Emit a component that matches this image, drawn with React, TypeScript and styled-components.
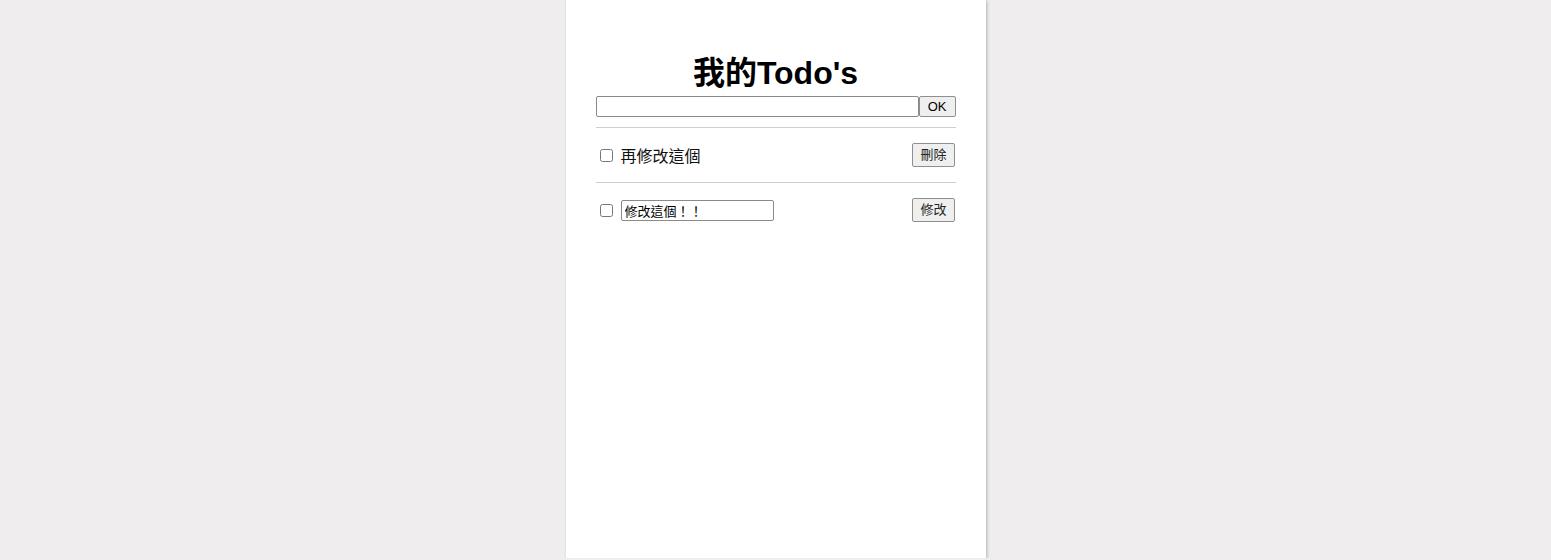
import React, { useState } from "react";
import styled, { createGlobalStyle } from "styled-components";

const GlobalStyle = createGlobalStyle`
  html, body {
    margin: 0;
    padding: 0;
    background: #efedee;
    font-family: "Liberation Sans", "Noto Sans CJK TC", sans-serif;
  }
`;

type Todo = { id: number; text: string; editing: boolean; done: boolean };

const App = () => {
  const [todos, setTodos] = useState<Todo[]>([
    { id: 1, text: "再修改這個", editing: false, done: false },
    { id: 2, text: "修改這個！！", editing: true, done: false },
  ]);
  const [draft, setDraft] = useState("");

  const toggle = (id: number) =>
    setTodos((list) => list.map((t) => (t.id === id ? { ...t, done: !t.done } : t)));

  const changeText = (id: number, text: string) =>
    setTodos((list) => list.map((t) => (t.id === id ? { ...t, text } : t)));

  return (
    <>
      <GlobalStyle />
      <Card>
        <Title>我的Todo's</Title>
        <AddForm onSubmit={(e) => e.preventDefault()}>
          <AddInput value={draft} onChange={(e) => setDraft(e.target.value)} />
          <Button type="submit">OK</Button>
        </AddForm>
        <List>
          {todos.map((t) => (
            <Row key={t.id}>
              <Check type="checkbox" checked={t.done} onChange={() => toggle(t.id)} />
              {t.editing ? (
                <EditInput value={t.text} onChange={(e) => changeText(t.id, e.target.value)} />
              ) : (
                <Label>{t.text}</Label>
              )}
              <RowButton>{t.editing ? "修改" : "刪除"}</RowButton>
            </Row>
          ))}
        </List>
      </Card>
    </>
  );
};

export default App;

const Card = styled.div`
  width: 420px;
  height: 558px;
  margin: 0 auto;
  box-sizing: border-box;
  padding: 54px 30px 0;
  background: #ffffff;
  box-shadow: 1px 1px 3px rgba(0, 0, 0, 0.25);
`;

const Title = styled.h1`
  margin: 0 0 4px;
  font-size: 32px;
  line-height: 38px;
  font-weight: bold;
  text-align: center;
  color: #000;
`;

const AddForm = styled.form`
  display: flex;
  height: 21px;
  padding-bottom: 10px;
  border-bottom: 1px solid #cfcfcf;
`;

const AddInput = styled.input`
  flex: 1;
  box-sizing: border-box;
  height: 21px;
  margin: 0;
  border: 1px solid #8a8a8a;
  border-radius: 2px;
  padding: 1px 2px;
  font-size: 13px;
`;

const Button = styled.button`
  box-sizing: border-box;
  margin: 0;
  height: 21px;
  padding: 0 8px;
  border: 1px solid #8f8f8f;
  border-radius: 2px;
  background: #efefef;
  color: #000;
  font-family: "Liberation Sans", "Noto Sans CJK TC", sans-serif;
  font-size: 13px;
  line-height: 19px;
  cursor: pointer;
`;

const RowButton = styled(Button)`
  margin-left: auto;
  margin-right: 1px;
  height: 24px;
  line-height: 22px;
  padding: 0 7px;
  color: #222;
`;

const List = styled.div`
  display: flex;
  flex-direction: column;
`;

const Row = styled.div`
  display: flex;
  align-items: center;
  height: 54px;
  border-bottom: 1px solid #cfcfcf;

  &:last-child {
    border-bottom: none;
  }
`;

const Check = styled.input`
  width: 13px;
  height: 13px;
  margin: 0 8px 0 4px;
`;

const Label = styled.span`
  font-family: "Liberation Sans", "Noto Sans CJK TC", sans-serif;
  font-size: 16px;
  color: #111;
`;

const EditInput = styled.input`
  box-sizing: border-box;
  width: 153px;
  height: 21px;
  margin: 0;
  padding: 1px 3px;
  border: 1px solid #8a8a8a;
  border-radius: 2px;
  font-family: "Liberation Sans", "Noto Sans CJK TC", sans-serif;
  font-size: 13px;
`;
